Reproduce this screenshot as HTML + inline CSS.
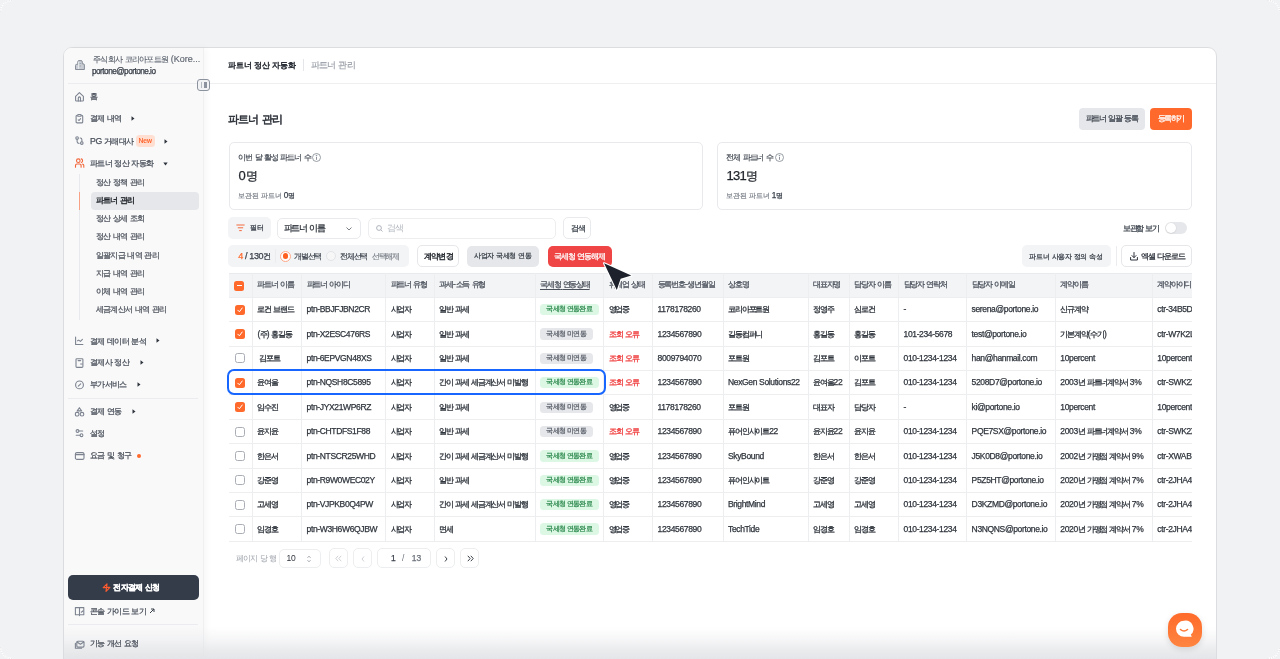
<!DOCTYPE html><html><head><meta charset="utf-8"><title>partner</title><style>
*{box-sizing:border-box;margin:0;padding:0}
html,body{width:1280px;height:659px;overflow:hidden}
body{background:#f1f2f4;font-family:"Liberation Sans",sans-serif;color:#333a45;position:relative}
i{font-style:normal}
.k{font-size:0.9em;letter-spacing:var(--ks,-0.09em)}
.bd .k{-webkit-text-stroke:0.25px currentColor}
.md{-webkit-text-stroke:0.25px currentColor}
.md2{-webkit-text-stroke:0.15px currentColor}
.tb{-webkit-text-stroke:0.25px currentColor}
.tb .k{letter-spacing:var(--ks,-0.15em);-webkit-text-stroke:0.3px currentColor}
.a{position:absolute;white-space:nowrap}
svg{position:absolute;overflow:visible}
</style></head><body><div id="root" style="position:absolute;left:0;top:0;width:1280px;height:659px;will-change:transform">
<div class="a" style="left:63px;top:47px;width:1154.00px;height:653.00px;background:#fff;border:1px solid #dcdde0;border-radius:9px;"></div>
<div class="a" style="left:64px;top:48px;width:140.00px;height:652.00px;background:#f9f9fa;border-right:1px solid #eff0f2;border-top-left-radius:8px;box-shadow:3px 0 6px rgba(20,24,30,0.03)"></div>
<div class="a" style="left:64px;top:627px;width:1152.00px;height:32.00px;background:linear-gradient(to bottom,rgba(228,229,232,0) 0%,rgba(228,229,232,0.35) 40%,rgba(228,229,232,0.75) 72%,rgba(228,229,232,1) 100%)"></div>
<div class="a" style="left:204px;top:83px;width:1012.00px;height:1.00px;background:#eeeff1"></div>
<div class="a" style="left:68px;top:83px;width:131.00px;height:1.00px;background:#ebecef"></div>
<svg style="left:75px;top:59.5px" width="10" height="10" viewBox="0 0 10 10"><path d="M0.5 9.5V5.5Q0.5 4.3 1.7 4.3H2.8V1.8Q2.8 0.6 4 0.6H6.1Q7.3 0.6 7.3 1.8V3.8H8.1Q9.4 3.8 9.4 5V9.5Z" fill="#c9cdd3" stroke="#7d8490" stroke-width="0.9" stroke-linejoin="round"/><path d="M3.6 1.6V9" stroke="#eef0f2" stroke-width="0.9"/><path d="M5.2 3V4M5.2 5.5V6.5" stroke="#7d8490" stroke-width="0.8"/></svg>
<div class="a md2" style="left:93px;top:52.40px;line-height:14px;font-size:9px;font-weight:normal;color:#5f6670;"><i class="k">주식회사</i> <i class="k">코리아포트원</i> (Kore...</div>
<div class="a  md" style="left:92px;top:65.20px;line-height:14px;font-size:8.2px;font-weight:normal;color:#333a44;letter-spacing:-0.5px">portone@portone.io</div>
<div class="a" style="left:197px;top:78.5px;width:13.00px;height:12.50px;background:#f1f2f4;border:1.6px solid #8c939e;border-radius:3px;"></div>
<div class="a" style="left:200.5px;top:81.5px;width:1.50px;height:6.50px;background:#b5bac2"></div>
<div class="a" style="left:203.5px;top:81.5px;width:3.00px;height:6.50px;background:#8c939e"></div>
<svg style="left:75px;top:91.7px" width="10" height="10" viewBox="0 0 10 10" fill="none" stroke="#7d8490" stroke-width="1.1" stroke-linecap="round" stroke-linejoin="round"><path d="M0.6 4.3L4.4 0.6L8.4 4.3V8.2Q8.4 9 7.6 9H1.4Q0.6 9 0.6 8.2Z"/><path d="M3.3 9V5.9Q3.3 4.9 4.4 4.9Q5.5 4.9 5.5 5.9V9"/></svg>
<div class="a  md" style="left:90px;top:89.30px;line-height:14px;font-size:8.7px;font-weight:normal;color:#4a515b;"><i class="k">홈</i></div>
<svg style="left:75px;top:113.8px" width="10" height="10" viewBox="0 0 10 10" fill="none" stroke="#7d8490" stroke-width="1.1" stroke-linecap="round" stroke-linejoin="round"><rect x="1.1" y="1.2" width="6.6" height="7.7" rx="1"/><path d="M2.8 1.2Q2.8 0.5 3.5 0.5H5.3Q6 0.5 6 1.2V2.2H2.8Z" fill="#fff"/><path d="M3.2 5.9L4.1 6.5L5.6 4.7"/></svg>
<div class="a  md" style="left:90px;top:111.40px;line-height:14px;font-size:8.7px;font-weight:normal;color:#4a515b;"><i class="k">결제</i> <i class="k">내역</i></div>
<svg style="left:131px;top:116.3px" width="4" height="5" viewBox="0 0 4 5"><path d="M0.5 0.3L3.5 2.5L0.5 4.7Z" fill="#2f353d"/></svg>
<svg style="left:75px;top:136.2px" width="10" height="10" viewBox="0 0 10 10" fill="none" stroke="#7d8490" stroke-width="1.1" stroke-linecap="round" stroke-linejoin="round"><circle cx="2.1" cy="2" r="1.3"/><path d="M2.1 3.3V5.6Q2.1 7.3 4 7.4"/><path d="M5.2 2Q6.9 2 6.9 3.8V5.7"/><circle cx="6.8" cy="7.1" r="1.3"/></svg>
<div class="a  md" style="left:90px;top:133.80px;line-height:14px;font-size:8.7px;font-weight:normal;color:#4a515b;letter-spacing:-0.3px">PG <i class="k">거래대사</i></div>
<svg style="left:164px;top:138.7px" width="4" height="5" viewBox="0 0 4 5"><path d="M0.5 0.3L3.5 2.5L0.5 4.7Z" fill="#2f353d"/></svg>
<div class="a" style="left:135.7px;top:135.3px;width:19.10px;height:11.40px;background:#ffdfd2;border-radius:3.5px;"></div>
<div class="a md2" style="left:138.4px;top:134.00px;line-height:14px;font-size:6.8px;font-weight:normal;color:#ff5a1f;letter-spacing:-0.1px">New</div>
<svg style="left:75px;top:158.1px" width="10" height="10" viewBox="0 0 10 10" fill="none" stroke="#f2673a" stroke-width="1.1" stroke-linecap="round" stroke-linejoin="round"><circle cx="3.3" cy="2.7" r="1.8"/><path d="M0.5 9.2V7.4Q0.5 6 2 6H4.6Q6.1 6 6.1 7.4V9.2"/><path d="M6.3 0.9Q7.6 1.2 7.6 2.7Q7.6 4.2 6.3 4.5"/><path d="M7.6 6.1Q8.8 6.3 8.8 7.6V9.2"/></svg>
<div class="a  md" style="left:90px;top:155.70px;line-height:14px;font-size:8.7px;font-weight:normal;color:#4a515b;"><i class="k">파트너</i> <i class="k">정산</i> <i class="k">자동화</i></div>
<svg style="left:162.5px;top:161.6px" width="5" height="4" viewBox="0 0 5 4"><path d="M0.3 0.5L4.7 0.5L2.5 3.5Z" fill="#2f353d"/></svg>
<div class="a" style="left:79px;top:174px;width:1.00px;height:146.00px;background:#e8e9ec"></div>
<div class="a" style="left:79px;top:192px;width:1.00px;height:18.00px;background:#f7a287"></div>
<div class="a" style="left:90.8px;top:192px;width:107.80px;height:18.00px;background:#e6e7ea;border-radius:4px;"></div>
<div class="a  md" style="left:95.7px;top:174.90px;line-height:14px;font-size:9px;font-weight:normal;color:#50565f;"><i class="k">정산</i> <i class="k">정책</i> <i class="k">관리</i></div>
<div class="a  md" style="left:95.7px;top:193.09px;line-height:14px;font-size:9px;font-weight:normal;color:#1f242b;-webkit-text-stroke:0.4px currentColor"><i class="k">파트너</i> <i class="k">관리</i></div>
<div class="a  md" style="left:95.7px;top:211.28px;line-height:14px;font-size:9px;font-weight:normal;color:#50565f;"><i class="k">정산</i> <i class="k">상세</i> <i class="k">조회</i></div>
<div class="a  md" style="left:95.7px;top:229.47px;line-height:14px;font-size:9px;font-weight:normal;color:#50565f;"><i class="k">정산</i> <i class="k">내역</i> <i class="k">관리</i></div>
<div class="a  md" style="left:95.7px;top:247.66px;line-height:14px;font-size:9px;font-weight:normal;color:#50565f;"><i class="k">일괄지급</i> <i class="k">내역</i> <i class="k">관리</i></div>
<div class="a  md" style="left:95.7px;top:265.85px;line-height:14px;font-size:9px;font-weight:normal;color:#50565f;"><i class="k">지급</i> <i class="k">내역</i> <i class="k">관리</i></div>
<div class="a  md" style="left:95.7px;top:284.04px;line-height:14px;font-size:9px;font-weight:normal;color:#50565f;"><i class="k">이체</i> <i class="k">내역</i> <i class="k">관리</i></div>
<div class="a  md" style="left:95.7px;top:302.23px;line-height:14px;font-size:9px;font-weight:normal;color:#50565f;"><i class="k">세금계산서</i> <i class="k">내역</i> <i class="k">관리</i></div>
<svg style="left:75px;top:335.9px" width="10" height="10" viewBox="0 0 10 10" fill="none" stroke="#7d8490" stroke-width="1.1" stroke-linecap="round" stroke-linejoin="round"><path d="M0.6 1V8.5H7.9"/><path d="M2.6 4.8L3.7 4.1L5.4 5.4L7.4 3.4"/></svg>
<div class="a  md" style="left:90px;top:333.50px;line-height:14px;font-size:8.7px;font-weight:normal;color:#4a515b;"><i class="k">결제</i> <i class="k">데이터</i> <i class="k">분석</i></div>
<svg style="left:156px;top:338.4px" width="4" height="5" viewBox="0 0 4 5"><path d="M0.5 0.3L3.5 2.5L0.5 4.7Z" fill="#2f353d"/></svg>
<svg style="left:75px;top:357.5px" width="10" height="10" viewBox="0 0 10 10" fill="none" stroke="#7d8490" stroke-width="1.1" stroke-linecap="round" stroke-linejoin="round"><rect x="1" y="0.7" width="6.9" height="8.7" rx="0.9"/><path d="M3.2 2.6H5.6" stroke-width="1.3"/><path d="M5.6 6H7.2" stroke-width="1.1"/></svg>
<div class="a  md" style="left:90px;top:355.10px;line-height:14px;font-size:8.7px;font-weight:normal;color:#4a515b;"><i class="k">결제사</i> <i class="k">정산</i></div>
<svg style="left:139.5px;top:360.0px" width="4" height="5" viewBox="0 0 4 5"><path d="M0.5 0.3L3.5 2.5L0.5 4.7Z" fill="#2f353d"/></svg>
<svg style="left:75px;top:379.6px" width="10" height="10" viewBox="0 0 10 10" fill="none" stroke="#7d8490" stroke-width="1.1" stroke-linecap="round" stroke-linejoin="round"><circle cx="4.5" cy="4.9" r="3.9"/><path d="M3.3 6.1L5.7 3.8"/></svg>
<div class="a  md" style="left:90px;top:377.20px;line-height:14px;font-size:8.7px;font-weight:normal;color:#4a515b;"><i class="k">부가서비스</i></div>
<svg style="left:137px;top:382.1px" width="4" height="5" viewBox="0 0 4 5"><path d="M0.5 0.3L3.5 2.5L0.5 4.7Z" fill="#2f353d"/></svg>
<div class="a" style="left:68px;top:398px;width:130.00px;height:1.00px;background:#ebecef"></div>
<svg style="left:75px;top:406.8px" width="10" height="10" viewBox="0 0 10 10" fill="none" stroke="#7d8490" stroke-width="1.1" stroke-linecap="round" stroke-linejoin="round"><path d="M4.4 0.7L6.6 3.9H2.2Z"/><rect x="0.4" y="5.4" width="3.5" height="3.6" rx="1.2"/><circle cx="7" cy="7.2" r="1.8"/></svg>
<div class="a  md" style="left:90px;top:404.40px;line-height:14px;font-size:8.7px;font-weight:normal;color:#4a515b;"><i class="k">결제</i> <i class="k">연동</i></div>
<svg style="left:132.3px;top:409.3px" width="4" height="5" viewBox="0 0 4 5"><path d="M0.5 0.3L3.5 2.5L0.5 4.7Z" fill="#2f353d"/></svg>
<svg style="left:75px;top:428.4px" width="10" height="10" viewBox="0 0 10 10" fill="none" stroke="#7d8490" stroke-width="1.1" stroke-linecap="round" stroke-linejoin="round"><circle cx="2.5" cy="3" r="1.4"/><path d="M3.9 3H7.7M1.2 7.2H5"/><circle cx="6.5" cy="7.2" r="1.4"/></svg>
<div class="a  md" style="left:90px;top:426.00px;line-height:14px;font-size:8.7px;font-weight:normal;color:#4a515b;"><i class="k">설정</i></div>
<svg style="left:75px;top:450.5px" width="10" height="10" viewBox="0 0 10 10" fill="none" stroke="#7d8490" stroke-width="1.1" stroke-linecap="round" stroke-linejoin="round"><rect x="0.4" y="1.6" width="8.6" height="6.8" rx="1.5"/><path d="M0.4 3.6H9"/></svg>
<div class="a  md" style="left:90px;top:448.10px;line-height:14px;font-size:8.7px;font-weight:normal;color:#4a515b;"><i class="k">요금</i> <i class="k">및</i> <i class="k">청구</i></div>
<div class="a" style="left:137.2px;top:453.5px;width:4.00px;height:4.00px;background:#ff6a2c;border-radius:50%"></div>
<div class="a" style="left:68.2px;top:575.2px;width:130.50px;height:24.80px;background:#343c4a;border-radius:5px;"></div>
<svg style="left:102px;top:583px" width="9" height="9" viewBox="0 0 9 9" fill="none" stroke="#ff5b2e" stroke-width="1.1" stroke-linejoin="round" stroke-linecap="round"><path d="M5 0.9L1.2 4.6H4.5L4 8.4L7.9 4.4H4.6Z"/></svg>
<div class="a  bd" style="left:113.4px;top:579.80px;line-height:14px;font-size:9px;font-weight:bold;color:#ffffff;"><i class="k">전자결제</i> <i class="k">신청</i></div>
<svg style="left:75px;top:605.9px" width="10" height="10" viewBox="0 0 10 10" fill="none" stroke="#7d8490" stroke-width="1.1" stroke-linecap="round" stroke-linejoin="round"><path d="M0.4 1.6H4.5V8.7H0.4ZM4.5 1.6H8.8V8.7H4.5M4.5 8.7V9.6"/><path d="M6.3 6.2L8.2 4.8"/></svg>
<div class="a  md" style="left:90px;top:603.50px;line-height:14px;font-size:8.7px;font-weight:normal;color:#4a515b;"><i class="k">콘솔</i> <i class="k">가이드</i> <i class="k">보기</i></div>
<svg style="left:149px;top:607.5px" width="6" height="6" viewBox="0 0 6 6" fill="none" stroke="#3a414b" stroke-width="1"><path d="M1 5L5 1M2 1H5V4"/></svg>
<div class="a" style="left:68px;top:624px;width:130.00px;height:1.00px;background:#ebecef"></div>
<svg style="left:75px;top:638.6px" width="10" height="10" viewBox="0 0 10 10" fill="none" stroke="#7d8490" stroke-width="1.1" stroke-linecap="round" stroke-linejoin="round"><path d="M0.4 4.3V9.3H6.6"/><rect x="1.8" y="2.3" width="7.2" height="5.8" rx="1"/><path d="M2 3L5.4 5.2L8.8 3"/></svg>
<div class="a  md" style="left:90px;top:636.20px;line-height:14px;font-size:8.7px;font-weight:normal;color:#4a515b;"><i class="k">기능</i> <i class="k">개선</i> <i class="k">요청</i></div>
<div class="a  md" style="left:228.3px;top:57.60px;line-height:14px;font-size:9.3px;font-weight:normal;color:#262b33;-webkit-text-stroke:0.45px currentColor;--ks:-0.25px"><i class="k">파트너</i> <i class="k">정산</i> <i class="k">자동화</i></div>
<div class="a" style="left:303px;top:59.3px;width:1.00px;height:11.50px;background:#e5e6e9"></div>
<div class="a md2" style="left:311px;top:57.60px;line-height:14px;font-size:9.8px;font-weight:normal;color:#979ca5;"><i class="k">파트너</i> <i class="k">관리</i></div>
<div class="a  md" style="left:228.3px;top:109.60px;line-height:18px;font-size:12.5px;font-weight:normal;color:#262b33;-webkit-text-stroke:0.5px currentColor"><i class="k">파트너</i> <i class="k">관리</i></div>
<div class="a" style="left:1079.1px;top:108.1px;width:65.90px;height:22.10px;background:#e6e7ea;border-radius:4px;"></div>
<div class="a  md" style="left:1085.7px;top:111.20px;line-height:14px;font-size:8.5px;font-weight:normal;color:#3a414b;;--ks:-1.3px"><i class="k">파트너</i> <i class="k">일괄</i> <i class="k">등록</i></div>
<div class="a" style="left:1150.2px;top:108.1px;width:41.70px;height:22.10px;background:#ff6a2c;border-radius:4px;"></div>
<div class="a  md" style="left:1157.5px;top:111.20px;line-height:14px;font-size:8.5px;font-weight:normal;color:#ffffff;;--ks:-1.35px"><i class="k">등록하기</i></div>
<div class="a" style="left:228.6px;top:142.1px;width:474.40px;height:68.40px;border:1px solid #e8e9ec;border-radius:5px;"></div>
<div class="a md2" style="left:238.4px;top:149.80px;line-height:14px;font-size:8.5px;font-weight:normal;color:#3d444e;;--ks:-1.05px"><i class="k">이번</i> <i class="k">달</i> <i class="k">활성</i> <i class="k">파트너</i> <i class="k">수</i></div>
<div class="a" style="left:716.5px;top:142.1px;width:475.50px;height:68.40px;border:1px solid #e8e9ec;border-radius:5px;"></div>
<div class="a md2" style="left:726.3px;top:149.80px;line-height:14px;font-size:8.5px;font-weight:normal;color:#3d444e;;--ks:-1.05px"><i class="k">전체</i> <i class="k">파트너</i> <i class="k">수</i></div>
<svg style="left:311.8px;top:152.7px" width="9" height="9" viewBox="0 0 9 9" fill="none" stroke="#7f8690" stroke-width="0.8"><circle cx="4.5" cy="4.5" r="4"/><path d="M4.5 4V6.8" stroke-width="0.9"/><circle cx="4.5" cy="2.6" r="0.4" fill="#7f8690"/></svg>
<svg style="left:774.8px;top:152.7px" width="9" height="9" viewBox="0 0 9 9" fill="none" stroke="#7f8690" stroke-width="0.8"><circle cx="4.5" cy="4.5" r="4"/><path d="M4.5 4V6.8" stroke-width="0.9"/><circle cx="4.5" cy="2.6" r="0.4" fill="#7f8690"/></svg>
<div class="a  md" style="left:238.4px;top:167.10px;line-height:18px;font-size:13px;font-weight:normal;color:#1f242b;">0<i class="k">명</i></div>
<div class="a  md" style="left:726.4px;top:167.10px;line-height:18px;font-size:13px;font-weight:normal;color:#1f242b;letter-spacing:-0.7px">131<i class="k">명</i></div>
<div class="a md2" style="left:238.4px;top:188.70px;line-height:14px;font-size:8.2px;font-weight:normal;color:#737982;;--ks:-0.2px"><i class="k">보관된</i> <i class="k">파트너</i> <b style="color:#3a414b;font-weight:normal" class="md">0<i class="k">명</i></b></div>
<div class="a md2" style="left:726.4px;top:188.70px;line-height:14px;font-size:8.2px;font-weight:normal;color:#737982;;--ks:-0.2px"><i class="k">보관된</i> <i class="k">파트너</i> <b style="color:#3a414b;font-weight:normal" class="md">1<i class="k">명</i></b></div>
<div class="a" style="left:228.4px;top:216.9px;width:42.60px;height:21.90px;background:#f3f4f6;border-radius:5px;"></div>
<svg style="left:236px;top:224px" width="9" height="8" viewBox="0 0 9 8" fill="none" stroke="#f26a3d" stroke-width="1" stroke-linecap="round"><path d="M0.8 1H8.2M2.2 3.8H6.8M3.6 6.6H5.4"/></svg>
<div class="a  md" style="left:250.3px;top:220.50px;line-height:14px;font-size:7.8px;font-weight:normal;color:#3a414b;"><i class="k">필터</i></div>
<div class="a" style="left:276.7px;top:217.5px;width:84.60px;height:21.90px;background:#fff;border:1px solid #e9eaed;border-radius:5px;"></div>
<div class="a  md" style="left:283.6px;top:221.20px;line-height:14px;font-size:9.5px;font-weight:normal;color:#2a3038;;--ks:-1.27px"><i class="k">파트너</i> <i class="k">이름</i></div>
<svg style="left:346px;top:226.5px" width="6" height="4" viewBox="0 0 6 4" fill="none" stroke="#6b717b" stroke-width="0.9"><path d="M0.5 0.5L3 3L5.5 0.5"/></svg>
<div class="a" style="left:367.9px;top:217.5px;width:188.40px;height:21.90px;background:#fff;border:1px solid #eceef0;border-radius:5px;"></div>
<svg style="left:375.6px;top:225px" width="7" height="7" viewBox="0 0 7 7" fill="none" stroke="#a7acb4" stroke-width="0.9"><circle cx="3" cy="3" r="2.4"/><path d="M4.8 4.8L6.5 6.5"/></svg>
<div class="a " style="left:386.6px;top:221.00px;line-height:14px;font-size:10px;font-weight:normal;color:#b3b8bf;"><i class="k">검색</i></div>
<div class="a" style="left:563.4px;top:217.3px;width:28.10px;height:21.40px;background:#fff;border:1px solid #e9eaed;border-radius:5px;"></div>
<div class="a  md" style="left:571.1px;top:220.60px;line-height:14px;font-size:8.5px;font-weight:normal;color:#3a414b;"><i class="k">검색</i></div>
<div class="a  md" style="left:1123px;top:220.60px;line-height:14px;font-size:8.5px;font-weight:normal;color:#3a414b;;--ks:-1.3px"><i class="k">보관함</i> <i class="k">보기</i></div>
<div class="a" style="left:1165.2px;top:222.2px;width:21.80px;height:11.60px;background:#e6e7ea;border-radius:6px;"></div>
<div class="a" style="left:1166.2px;top:223px;width:10.30px;height:10.00px;background:#fff;border-radius:50%;box-shadow:0 0.5px 1.5px rgba(0,0,0,.15)"></div>
<div class="a" style="left:228.4px;top:245.4px;width:180.60px;height:21.40px;background:#f3f4f6;border-radius:5px;"></div>
<div class="a  md" style="left:238.2px;top:248.50px;line-height:14px;font-size:9px;font-weight:normal;color:#3a414b;letter-spacing:-0.35px"><span style="color:#ff6a2c">4</span> / 130<i class="k">건</i></div>
<div class="a" style="left:275.3px;top:249px;width:0.70px;height:14.00px;background:#ebecef"></div>
<div class="a" style="left:280px;top:250.5px;width:11.00px;height:11.00px;border:1px solid #ffa886;border-radius:50%;background:#fff"></div>
<div class="a" style="left:282.9px;top:253.4px;width:5.20px;height:5.20px;background:#ff5f1f;border-radius:50%"></div>
<div class="a md2" style="left:294px;top:248.50px;line-height:14px;font-size:8.5px;font-weight:normal;color:#3a414b;;--ks:-1.24px"><i class="k">개별선택</i></div>
<div class="a" style="left:326.3px;top:251.2px;width:10.00px;height:10.00px;border:1px solid #e3e4e7;border-radius:50%;background:#f7f7f8"></div>
<div class="a md2" style="left:340px;top:248.50px;line-height:14px;font-size:8.5px;font-weight:normal;color:#3a414b;;--ks:-1.24px"><i class="k">전체선택</i></div>
<div class="a md2" style="left:371.7px;top:248.50px;line-height:14px;font-size:8.5px;font-weight:normal;color:#7b818a;;--ks:-1.1px"><i class="k">선택해제</i></div>
<div class="a" style="left:416.6px;top:245.4px;width:42.70px;height:21.40px;background:#fff;border:1px solid #e6e7ea;border-radius:5px;"></div>
<div class="a  md" style="left:423.7px;top:248.50px;line-height:14px;font-size:8.4px;font-weight:normal;color:#23282f;-webkit-text-stroke:0.4px currentColor"><i class="k">계약변경</i></div>
<div class="a" style="left:466.8px;top:245.5px;width:72.70px;height:21.40px;background:#e6e7ea;border-radius:5px;"></div>
<div class="a  md" style="left:474px;top:248.50px;line-height:14px;font-size:8.2px;font-weight:normal;color:#3a414b;;--ks:-0.36px"><i class="k">사업자</i> <i class="k">국세청</i> <i class="k">연동</i></div>
<div class="a" style="left:547.5px;top:245.5px;width:64.10px;height:21.40px;background:#ef4545;border-radius:5px;"></div>
<div class="a  md" style="left:554.2px;top:248.50px;line-height:14px;font-size:8.5px;font-weight:normal;color:#ffffff;;--ks:-1.1px"><i class="k">국세청</i> <i class="k">연동해제</i></div>
<div class="a" style="left:1022px;top:245.1px;width:88.70px;height:21.80px;background:#f3f4f6;border-radius:5px;"></div>
<div class="a  md" style="left:1029.3px;top:248.50px;line-height:14px;font-size:8.3px;font-weight:normal;color:#3a414b;;--ks:-0.35px"><i class="k">파트너</i> <i class="k">사용자</i> <i class="k">정의</i> <i class="k">속성</i></div>
<div class="a" style="left:1116px;top:246px;width:1.00px;height:20.00px;background:#ebecef"></div>
<div class="a" style="left:1121.3px;top:245.1px;width:70.70px;height:21.80px;background:#fff;border:1px solid #e6e7ea;border-radius:5px;"></div>
<svg style="left:1130.3px;top:251.5px" width="8" height="9" viewBox="0 0 8 9" fill="none" stroke="#2f353d" stroke-width="1" stroke-linecap="round" stroke-linejoin="round"><path d="M4 0.5V5.5M2 3.6L4 5.6L6 3.6M0.6 5.5V8H7.4V5.5"/></svg>
<div class="a  md" style="left:1141.2px;top:248.50px;line-height:14px;font-size:8.5px;font-weight:normal;color:#2b313a;;--ks:-1.2px"><i class="k">엑셀</i> <i class="k">다운로드</i></div>
<div class="a" style="left:228.5px;top:272px;width:963.5px;height:272px;overflow:hidden">
<div class="a" style="left:0.0px;top:1.0px;width:1031.50px;height:24.50px;background:#f3f4f6;border-top:1px solid #e9eaed"></div>
<div class="a" style="left:23.4px;top:1.0px;width:1.00px;height:268.20px;background:#eceef0"></div>
<div class="a" style="left:72.5px;top:1.0px;width:1.00px;height:268.20px;background:#eceef0"></div>
<div class="a" style="left:156.5px;top:1.0px;width:1.00px;height:268.20px;background:#eceef0"></div>
<div class="a" style="left:205.4px;top:1.0px;width:1.00px;height:268.20px;background:#eceef0"></div>
<div class="a" style="left:306.0px;top:1.0px;width:1.00px;height:268.20px;background:#eceef0"></div>
<div class="a" style="left:374.5px;top:1.0px;width:1.00px;height:268.20px;background:#eceef0"></div>
<div class="a" style="left:423.5px;top:1.0px;width:1.00px;height:268.20px;background:#eceef0"></div>
<div class="a" style="left:494.0px;top:1.0px;width:1.00px;height:268.20px;background:#eceef0"></div>
<div class="a" style="left:579.0px;top:1.0px;width:1.00px;height:268.20px;background:#eceef0"></div>
<div class="a" style="left:620.3px;top:1.0px;width:1.00px;height:268.20px;background:#eceef0"></div>
<div class="a" style="left:669.5px;top:1.0px;width:1.00px;height:268.20px;background:#eceef0"></div>
<div class="a" style="left:737.6px;top:1.0px;width:1.00px;height:268.20px;background:#eceef0"></div>
<div class="a" style="left:826.3px;top:1.0px;width:1.00px;height:268.20px;background:#eceef0"></div>
<div class="a" style="left:923.3px;top:1.0px;width:1.00px;height:268.20px;background:#eceef0"></div>
<div class="a" style="left:0.0px;top:25.0px;width:1031.50px;height:1.00px;background:#eceef0"></div>
<div class="a" style="left:0.0px;top:49.37px;width:1031.50px;height:1.00px;background:#eceef0"></div>
<div class="a" style="left:0.0px;top:73.74px;width:1031.50px;height:1.00px;background:#eceef0"></div>
<div class="a" style="left:0.0px;top:98.11px;width:1031.50px;height:1.00px;background:#eceef0"></div>
<div class="a" style="left:0.0px;top:122.48px;width:1031.50px;height:1.00px;background:#eceef0"></div>
<div class="a" style="left:0.0px;top:146.85px;width:1031.50px;height:1.00px;background:#eceef0"></div>
<div class="a" style="left:0.0px;top:171.22px;width:1031.50px;height:1.00px;background:#eceef0"></div>
<div class="a" style="left:0.0px;top:195.59px;width:1031.50px;height:1.00px;background:#eceef0"></div>
<div class="a" style="left:0.0px;top:219.96px;width:1031.50px;height:1.00px;background:#eceef0"></div>
<div class="a" style="left:0.0px;top:244.33px;width:1031.50px;height:1.00px;background:#eceef0"></div>
<div class="a" style="left:0.0px;top:268.7px;width:1031.50px;height:1.00px;background:#eceef0"></div>
<div class="a" style="left:5.7px;top:8.5px;width:10.20px;height:10.00px;background:#ff6a2c;border-radius:2.5px"></div>
<div class="a" style="left:8.0px;top:13px;width:5.60px;height:1.20px;background:#fff"></div>
<div class="a  md" style="left:28.9px;top:4.95px;line-height:14px;font-size:8.5px;font-weight:normal;color:#4a515b;;--ks:-1.25px"><i class="k">파트너</i> <i class="k">이름</i></div>
<div class="a  md" style="left:78.0px;top:4.95px;line-height:14px;font-size:8.5px;font-weight:normal;color:#4a515b;;--ks:-1.25px"><i class="k">파트너</i> <i class="k">아이디</i></div>
<div class="a  md" style="left:162.0px;top:4.95px;line-height:14px;font-size:8.5px;font-weight:normal;color:#4a515b;;--ks:-1.25px"><i class="k">파트너</i> <i class="k">유형</i></div>
<div class="a  md" style="left:210.9px;top:4.95px;line-height:14px;font-size:8.5px;font-weight:normal;color:#4a515b;;--ks:-1.25px"><i class="k">과세</i>-<i class="k">소득</i> <i class="k">유형</i></div>
<div class="a  md" style="left:311.5px;top:4.95px;line-height:14px;font-size:8.5px;font-weight:normal;color:#4a515b;text-decoration:underline;text-underline-offset:1.5px;--ks:-1.25px"><i class="k">국세청</i> <i class="k">연동상태</i></div>
<div class="a  md" style="left:380.0px;top:4.95px;line-height:14px;font-size:8.5px;font-weight:normal;color:#4a515b;;--ks:-1.25px"><i class="k">휴폐업</i> <i class="k">상태</i></div>
<div class="a  md" style="left:429.0px;top:4.95px;line-height:14px;font-size:8.5px;font-weight:normal;color:#4a515b;;--ks:-1.25px"><i class="k">등록번호</i>-<i class="k">생년월일</i></div>
<div class="a  md" style="left:499.5px;top:4.95px;line-height:14px;font-size:8.5px;font-weight:normal;color:#4a515b;;--ks:-1.25px"><i class="k">상호명</i></div>
<div class="a  md" style="left:584.5px;top:4.95px;line-height:14px;font-size:8.5px;font-weight:normal;color:#4a515b;;--ks:-1.25px"><i class="k">대표자명</i></div>
<div class="a  md" style="left:625.8px;top:4.95px;line-height:14px;font-size:8.5px;font-weight:normal;color:#4a515b;;--ks:-1.25px"><i class="k">담당자</i> <i class="k">이름</i></div>
<div class="a  md" style="left:675.0px;top:4.95px;line-height:14px;font-size:8.5px;font-weight:normal;color:#4a515b;;--ks:-1.25px"><i class="k">담당자</i> <i class="k">연락처</i></div>
<div class="a  md" style="left:743.1px;top:4.95px;line-height:14px;font-size:8.5px;font-weight:normal;color:#4a515b;;--ks:-1.25px"><i class="k">담당자</i> <i class="k">이메일</i></div>
<div class="a  md" style="left:831.8px;top:4.95px;line-height:14px;font-size:8.5px;font-weight:normal;color:#4a515b;;--ks:-1.25px"><i class="k">계약이름</i></div>
<div class="a  md" style="left:928.8px;top:4.95px;line-height:14px;font-size:8.5px;font-weight:normal;color:#4a515b;;--ks:-1.25px"><i class="k">계약아이디</i></div>
<div class="a" style="left:6.7px;top:32.69px;width:10.00px;height:10.00px;background:#ff6a2c;border-radius:2.5px"></div>
<svg style="left:8.699999999999989px;top:34.685px;position:absolute" width="6" height="6" viewBox="0 0 6 6" fill="none" stroke="#fff" stroke-width="1" stroke-linecap="round" stroke-linejoin="round"><path d="M0.8 3.2L2.4 4.8L5.2 1"/></svg>
<div class="a tb " style="left:28.9px;top:30.29px;line-height:14px;font-size:8.5px;font-weight:normal;color:#2f353d;letter-spacing:-0.35px"><i class="k">로건</i> <i class="k">브랜드</i></div>
<div class="a tb " style="left:78.0px;top:30.29px;line-height:14px;font-size:8.5px;font-weight:normal;color:#2f353d;letter-spacing:-0.35px">ptn-BBJFJBN2CR</div>
<div class="a tb " style="left:162.0px;top:30.29px;line-height:14px;font-size:8.5px;font-weight:normal;color:#2f353d;letter-spacing:-0.35px"><i class="k">사업자</i></div>
<div class="a tb " style="left:210.9px;top:30.29px;line-height:14px;font-size:8.5px;font-weight:normal;color:#2f353d;letter-spacing:-0.35px"><i class="k">일반</i> <i class="k">과세</i></div>
<div class="a" style="left:311.7px;top:32.08px;width:58.60px;height:11.30px;background:#dcf8e5;border-radius:3.5px"></div>
<div class="a  md" style="left:317.9px;top:30.29px;line-height:14px;font-size:8px;font-weight:normal;color:#2f8a4f;;--ks:-0.85px"><i class="k">국세청</i> <i class="k">연동완료</i></div>
<div class="a tb " style="left:380.0px;top:30.29px;line-height:14px;font-size:8.5px;font-weight:normal;color:#2f353d;letter-spacing:-0.35px"><i class="k">영업중</i></div>
<div class="a tb " style="left:429.0px;top:30.29px;line-height:14px;font-size:8.5px;font-weight:normal;color:#2f353d;letter-spacing:-0.35px">1178178260</div>
<div class="a tb " style="left:499.5px;top:30.29px;line-height:14px;font-size:8.5px;font-weight:normal;color:#2f353d;letter-spacing:-0.35px"><i class="k">코리아포트원</i></div>
<div class="a tb " style="left:584.5px;top:30.29px;line-height:14px;font-size:8.5px;font-weight:normal;color:#2f353d;letter-spacing:-0.35px"><i class="k">정영주</i></div>
<div class="a tb " style="left:625.8px;top:30.29px;line-height:14px;font-size:8.5px;font-weight:normal;color:#2f353d;letter-spacing:-0.35px"><i class="k">심로건</i></div>
<div class="a tb " style="left:675.0px;top:30.29px;line-height:14px;font-size:8.5px;font-weight:normal;color:#2f353d;letter-spacing:-0.35px">-</div>
<div class="a tb " style="left:743.1px;top:30.29px;line-height:14px;font-size:8.5px;font-weight:normal;color:#2f353d;letter-spacing:-0.35px">serena@portone.io</div>
<div class="a tb " style="left:831.8px;top:30.29px;line-height:14px;font-size:8.5px;font-weight:normal;color:#2f353d;letter-spacing:-0.35px"><i class="k">신규계약</i></div>
<div class="a tb " style="left:928.8px;top:30.29px;line-height:14px;font-size:8.5px;font-weight:normal;color:#2f353d;letter-spacing:-0.35px">ctr-34B5D8</div>
<div class="a" style="left:6.7px;top:57.06px;width:10.00px;height:10.00px;background:#ff6a2c;border-radius:2.5px"></div>
<svg style="left:8.699999999999989px;top:59.05500000000001px;position:absolute" width="6" height="6" viewBox="0 0 6 6" fill="none" stroke="#fff" stroke-width="1" stroke-linecap="round" stroke-linejoin="round"><path d="M0.8 3.2L2.4 4.8L5.2 1"/></svg>
<div class="a tb " style="left:28.9px;top:54.66px;line-height:14px;font-size:8.5px;font-weight:normal;color:#2f353d;letter-spacing:-0.35px">(<i class="k">주</i>) <i class="k">홍길동</i></div>
<div class="a tb " style="left:78.0px;top:54.66px;line-height:14px;font-size:8.5px;font-weight:normal;color:#2f353d;letter-spacing:-0.35px">ptn-X2ESC476RS</div>
<div class="a tb " style="left:162.0px;top:54.66px;line-height:14px;font-size:8.5px;font-weight:normal;color:#2f353d;letter-spacing:-0.35px"><i class="k">사업자</i></div>
<div class="a tb " style="left:210.9px;top:54.66px;line-height:14px;font-size:8.5px;font-weight:normal;color:#2f353d;letter-spacing:-0.35px"><i class="k">일반</i> <i class="k">과세</i></div>
<div class="a" style="left:311.7px;top:56.45px;width:52.50px;height:11.30px;background:#e6e7ea;border-radius:3.5px"></div>
<div class="a  md" style="left:317.9px;top:54.66px;line-height:14px;font-size:8px;font-weight:normal;color:#5b616b;;--ks:-0.8px"><i class="k">국세청</i> <i class="k">미연동</i></div>
<div class="a tb " style="left:380.6px;top:54.66px;line-height:14px;font-size:8.5px;font-weight:normal;color:#f03e3e;"><i class="k">조회</i> <i class="k">오류</i></div>
<div class="a tb " style="left:429.0px;top:54.66px;line-height:14px;font-size:8.5px;font-weight:normal;color:#2f353d;letter-spacing:-0.35px">1234567890</div>
<div class="a tb " style="left:499.5px;top:54.66px;line-height:14px;font-size:8.5px;font-weight:normal;color:#2f353d;letter-spacing:-0.35px"><i class="k">길동컴퍼니</i></div>
<div class="a tb " style="left:584.5px;top:54.66px;line-height:14px;font-size:8.5px;font-weight:normal;color:#2f353d;letter-spacing:-0.35px"><i class="k">홍길동</i></div>
<div class="a tb " style="left:625.8px;top:54.66px;line-height:14px;font-size:8.5px;font-weight:normal;color:#2f353d;letter-spacing:-0.35px"><i class="k">홍길동</i></div>
<div class="a tb " style="left:675.0px;top:54.66px;line-height:14px;font-size:8.5px;font-weight:normal;color:#2f353d;letter-spacing:-0.35px">101-234-5678</div>
<div class="a tb " style="left:743.1px;top:54.66px;line-height:14px;font-size:8.5px;font-weight:normal;color:#2f353d;letter-spacing:-0.35px">test@portone.io</div>
<div class="a tb " style="left:831.8px;top:54.66px;line-height:14px;font-size:8.5px;font-weight:normal;color:#2f353d;letter-spacing:-0.35px"><i class="k">기본계약</i>(<i class="k">수기</i>)</div>
<div class="a tb " style="left:928.8px;top:54.66px;line-height:14px;font-size:8.5px;font-weight:normal;color:#2f353d;letter-spacing:-0.35px">ctr-W7K2L9</div>
<div class="a" style="left:6.7px;top:81.43px;width:10.00px;height:10.00px;background:#fff;border:1.2px solid #a9aeb6;border-radius:2.5px"></div>
<div class="a tb " style="left:28.9px;top:79.03px;line-height:14px;font-size:8.5px;font-weight:normal;color:#2f353d;letter-spacing:-0.35px">&nbsp;<i class="k">김포트</i></div>
<div class="a tb " style="left:78.0px;top:79.03px;line-height:14px;font-size:8.5px;font-weight:normal;color:#2f353d;letter-spacing:-0.35px">ptn-6EPVGN48XS</div>
<div class="a tb " style="left:162.0px;top:79.03px;line-height:14px;font-size:8.5px;font-weight:normal;color:#2f353d;letter-spacing:-0.35px"><i class="k">사업자</i></div>
<div class="a tb " style="left:210.9px;top:79.03px;line-height:14px;font-size:8.5px;font-weight:normal;color:#2f353d;letter-spacing:-0.35px"><i class="k">일반</i> <i class="k">과세</i></div>
<div class="a" style="left:311.7px;top:80.82px;width:52.50px;height:11.30px;background:#e6e7ea;border-radius:3.5px"></div>
<div class="a  md" style="left:317.9px;top:79.03px;line-height:14px;font-size:8px;font-weight:normal;color:#5b616b;;--ks:-0.8px"><i class="k">국세청</i> <i class="k">미연동</i></div>
<div class="a tb " style="left:380.6px;top:79.03px;line-height:14px;font-size:8.5px;font-weight:normal;color:#f03e3e;"><i class="k">조회</i> <i class="k">오류</i></div>
<div class="a tb " style="left:429.0px;top:79.03px;line-height:14px;font-size:8.5px;font-weight:normal;color:#2f353d;letter-spacing:-0.35px">8009794070</div>
<div class="a tb " style="left:499.5px;top:79.03px;line-height:14px;font-size:8.5px;font-weight:normal;color:#2f353d;letter-spacing:-0.35px"><i class="k">포트원</i></div>
<div class="a tb " style="left:584.5px;top:79.03px;line-height:14px;font-size:8.5px;font-weight:normal;color:#2f353d;letter-spacing:-0.35px"><i class="k">김포트</i></div>
<div class="a tb " style="left:625.8px;top:79.03px;line-height:14px;font-size:8.5px;font-weight:normal;color:#2f353d;letter-spacing:-0.35px"><i class="k">이포트</i></div>
<div class="a tb " style="left:675.0px;top:79.03px;line-height:14px;font-size:8.5px;font-weight:normal;color:#2f353d;letter-spacing:-0.35px">010-1234-1234</div>
<div class="a tb " style="left:743.1px;top:79.03px;line-height:14px;font-size:8.5px;font-weight:normal;color:#2f353d;letter-spacing:-0.35px">han@hanmail.com</div>
<div class="a tb " style="left:831.8px;top:79.03px;line-height:14px;font-size:8.5px;font-weight:normal;color:#2f353d;letter-spacing:-0.35px">10percent</div>
<div class="a tb " style="left:928.8px;top:79.03px;line-height:14px;font-size:8.5px;font-weight:normal;color:#2f353d;letter-spacing:-0.35px">10percent</div>
<div class="a" style="left:6.7px;top:105.8px;width:10.00px;height:10.00px;background:#ff6a2c;border-radius:2.5px"></div>
<svg style="left:8.699999999999989px;top:107.79500000000002px;position:absolute" width="6" height="6" viewBox="0 0 6 6" fill="none" stroke="#fff" stroke-width="1" stroke-linecap="round" stroke-linejoin="round"><path d="M0.8 3.2L2.4 4.8L5.2 1"/></svg>
<div class="a tb " style="left:28.9px;top:103.40px;line-height:14px;font-size:8.5px;font-weight:normal;color:#2f353d;letter-spacing:-0.35px"><i class="k">윤여울</i></div>
<div class="a tb " style="left:78.0px;top:103.40px;line-height:14px;font-size:8.5px;font-weight:normal;color:#2f353d;letter-spacing:-0.35px">ptn-NQSH8C5895</div>
<div class="a tb " style="left:162.0px;top:103.40px;line-height:14px;font-size:8.5px;font-weight:normal;color:#2f353d;letter-spacing:-0.35px"><i class="k">사업자</i></div>
<div class="a tb " style="left:210.9px;top:103.40px;line-height:14px;font-size:8.5px;font-weight:normal;color:#2f353d;letter-spacing:-0.35px"><i class="k">간이</i> <i class="k">과세</i> <i class="k">세금계산서</i> <i class="k">미발행</i></div>
<div class="a" style="left:311.7px;top:105.19px;width:58.60px;height:11.31px;background:#dcf8e5;border-radius:3.5px"></div>
<div class="a  md" style="left:317.9px;top:103.40px;line-height:14px;font-size:8px;font-weight:normal;color:#2f8a4f;;--ks:-0.85px"><i class="k">국세청</i> <i class="k">연동완료</i></div>
<div class="a tb " style="left:380.6px;top:103.40px;line-height:14px;font-size:8.5px;font-weight:normal;color:#f03e3e;"><i class="k">조회</i> <i class="k">오류</i></div>
<div class="a tb " style="left:429.0px;top:103.40px;line-height:14px;font-size:8.5px;font-weight:normal;color:#2f353d;letter-spacing:-0.35px">1234567890</div>
<div class="a tb " style="left:499.5px;top:103.40px;line-height:14px;font-size:8.5px;font-weight:normal;color:#2f353d;letter-spacing:-0.35px">NexGen Solutions22</div>
<div class="a tb " style="left:584.5px;top:103.40px;line-height:14px;font-size:8.5px;font-weight:normal;color:#2f353d;letter-spacing:-0.35px"><i class="k">윤여울</i>22</div>
<div class="a tb " style="left:625.8px;top:103.40px;line-height:14px;font-size:8.5px;font-weight:normal;color:#2f353d;letter-spacing:-0.35px"><i class="k">김포트</i></div>
<div class="a tb " style="left:675.0px;top:103.40px;line-height:14px;font-size:8.5px;font-weight:normal;color:#2f353d;letter-spacing:-0.35px">010-1234-1234</div>
<div class="a tb " style="left:743.1px;top:103.40px;line-height:14px;font-size:8.5px;font-weight:normal;color:#2f353d;letter-spacing:-0.35px">5208D7@portone.io</div>
<div class="a tb " style="left:831.8px;top:103.40px;line-height:14px;font-size:8.5px;font-weight:normal;color:#2f353d;letter-spacing:-0.35px">2003<i class="k">년</i> <i class="k">파트너계약서</i> 3%</div>
<div class="a tb " style="left:928.8px;top:103.40px;line-height:14px;font-size:8.5px;font-weight:normal;color:#2f353d;letter-spacing:-0.35px">ctr-SWK2X1</div>
<div class="a" style="left:6.7px;top:130.17px;width:10.00px;height:10.00px;background:#ff6a2c;border-radius:2.5px"></div>
<svg style="left:8.699999999999989px;top:132.16500000000002px;position:absolute" width="6" height="6" viewBox="0 0 6 6" fill="none" stroke="#fff" stroke-width="1" stroke-linecap="round" stroke-linejoin="round"><path d="M0.8 3.2L2.4 4.8L5.2 1"/></svg>
<div class="a tb " style="left:28.9px;top:127.77px;line-height:14px;font-size:8.5px;font-weight:normal;color:#2f353d;letter-spacing:-0.35px"><i class="k">임수진</i></div>
<div class="a tb " style="left:78.0px;top:127.77px;line-height:14px;font-size:8.5px;font-weight:normal;color:#2f353d;letter-spacing:-0.35px">ptn-JYX21WP6RZ</div>
<div class="a tb " style="left:162.0px;top:127.77px;line-height:14px;font-size:8.5px;font-weight:normal;color:#2f353d;letter-spacing:-0.35px"><i class="k">사업자</i></div>
<div class="a tb " style="left:210.9px;top:127.77px;line-height:14px;font-size:8.5px;font-weight:normal;color:#2f353d;letter-spacing:-0.35px"><i class="k">일반</i> <i class="k">과세</i></div>
<div class="a" style="left:311.7px;top:129.56px;width:52.50px;height:11.31px;background:#e6e7ea;border-radius:3.5px"></div>
<div class="a  md" style="left:317.9px;top:127.77px;line-height:14px;font-size:8px;font-weight:normal;color:#5b616b;;--ks:-0.8px"><i class="k">국세청</i> <i class="k">미연동</i></div>
<div class="a tb " style="left:380.0px;top:127.77px;line-height:14px;font-size:8.5px;font-weight:normal;color:#2f353d;letter-spacing:-0.35px"><i class="k">영업중</i></div>
<div class="a tb " style="left:429.0px;top:127.77px;line-height:14px;font-size:8.5px;font-weight:normal;color:#2f353d;letter-spacing:-0.35px">1178178260</div>
<div class="a tb " style="left:499.5px;top:127.77px;line-height:14px;font-size:8.5px;font-weight:normal;color:#2f353d;letter-spacing:-0.35px"><i class="k">포트원</i></div>
<div class="a tb " style="left:584.5px;top:127.77px;line-height:14px;font-size:8.5px;font-weight:normal;color:#2f353d;letter-spacing:-0.35px"><i class="k">대표자</i></div>
<div class="a tb " style="left:625.8px;top:127.77px;line-height:14px;font-size:8.5px;font-weight:normal;color:#2f353d;letter-spacing:-0.35px"><i class="k">담당자</i></div>
<div class="a tb " style="left:675.0px;top:127.77px;line-height:14px;font-size:8.5px;font-weight:normal;color:#2f353d;letter-spacing:-0.35px">-</div>
<div class="a tb " style="left:743.1px;top:127.77px;line-height:14px;font-size:8.5px;font-weight:normal;color:#2f353d;letter-spacing:-0.35px">ki@portone.io</div>
<div class="a tb " style="left:831.8px;top:127.77px;line-height:14px;font-size:8.5px;font-weight:normal;color:#2f353d;letter-spacing:-0.35px">10percent</div>
<div class="a tb " style="left:928.8px;top:127.77px;line-height:14px;font-size:8.5px;font-weight:normal;color:#2f353d;letter-spacing:-0.35px">10percent</div>
<div class="a" style="left:6.7px;top:154.54px;width:10.00px;height:10.00px;background:#fff;border:1.2px solid #a9aeb6;border-radius:2.5px"></div>
<div class="a tb " style="left:28.9px;top:152.14px;line-height:14px;font-size:8.5px;font-weight:normal;color:#2f353d;letter-spacing:-0.35px"><i class="k">윤지윤</i></div>
<div class="a tb " style="left:78.0px;top:152.14px;line-height:14px;font-size:8.5px;font-weight:normal;color:#2f353d;letter-spacing:-0.35px">ptn-CHTDFS1F88</div>
<div class="a tb " style="left:162.0px;top:152.14px;line-height:14px;font-size:8.5px;font-weight:normal;color:#2f353d;letter-spacing:-0.35px"><i class="k">사업자</i></div>
<div class="a tb " style="left:210.9px;top:152.14px;line-height:14px;font-size:8.5px;font-weight:normal;color:#2f353d;letter-spacing:-0.35px"><i class="k">일반</i> <i class="k">과세</i></div>
<div class="a" style="left:311.7px;top:153.94px;width:52.50px;height:11.30px;background:#e6e7ea;border-radius:3.5px"></div>
<div class="a  md" style="left:317.9px;top:152.14px;line-height:14px;font-size:8px;font-weight:normal;color:#5b616b;;--ks:-0.8px"><i class="k">국세청</i> <i class="k">미연동</i></div>
<div class="a tb " style="left:380.6px;top:152.14px;line-height:14px;font-size:8.5px;font-weight:normal;color:#f03e3e;"><i class="k">조회</i> <i class="k">오류</i></div>
<div class="a tb " style="left:429.0px;top:152.14px;line-height:14px;font-size:8.5px;font-weight:normal;color:#2f353d;letter-spacing:-0.35px">1234567890</div>
<div class="a tb " style="left:499.5px;top:152.14px;line-height:14px;font-size:8.5px;font-weight:normal;color:#2f353d;letter-spacing:-0.35px"><i class="k">퓨어인사이트</i>22</div>
<div class="a tb " style="left:584.5px;top:152.14px;line-height:14px;font-size:8.5px;font-weight:normal;color:#2f353d;letter-spacing:-0.35px"><i class="k">윤지윤</i>22</div>
<div class="a tb " style="left:625.8px;top:152.14px;line-height:14px;font-size:8.5px;font-weight:normal;color:#2f353d;letter-spacing:-0.35px"><i class="k">윤지윤</i></div>
<div class="a tb " style="left:675.0px;top:152.14px;line-height:14px;font-size:8.5px;font-weight:normal;color:#2f353d;letter-spacing:-0.35px">010-1234-1234</div>
<div class="a tb " style="left:743.1px;top:152.14px;line-height:14px;font-size:8.5px;font-weight:normal;color:#2f353d;letter-spacing:-0.35px">PQE7SX@portone.io</div>
<div class="a tb " style="left:831.8px;top:152.14px;line-height:14px;font-size:8.5px;font-weight:normal;color:#2f353d;letter-spacing:-0.35px">2003<i class="k">년</i> <i class="k">파트너계약서</i> 3%</div>
<div class="a tb " style="left:928.8px;top:152.14px;line-height:14px;font-size:8.5px;font-weight:normal;color:#2f353d;letter-spacing:-0.35px">ctr-SWK2X1</div>
<div class="a" style="left:6.7px;top:178.91px;width:10.00px;height:10.00px;background:#fff;border:1.2px solid #a9aeb6;border-radius:2.5px"></div>
<div class="a tb " style="left:28.9px;top:176.51px;line-height:14px;font-size:8.5px;font-weight:normal;color:#2f353d;letter-spacing:-0.35px"><i class="k">한은서</i></div>
<div class="a tb " style="left:78.0px;top:176.51px;line-height:14px;font-size:8.5px;font-weight:normal;color:#2f353d;letter-spacing:-0.35px">ptn-NTSCR25WHD</div>
<div class="a tb " style="left:162.0px;top:176.51px;line-height:14px;font-size:8.5px;font-weight:normal;color:#2f353d;letter-spacing:-0.35px"><i class="k">사업자</i></div>
<div class="a tb " style="left:210.9px;top:176.51px;line-height:14px;font-size:8.5px;font-weight:normal;color:#2f353d;letter-spacing:-0.35px"><i class="k">간이</i> <i class="k">과세</i> <i class="k">세금계산서</i> <i class="k">미발행</i></div>
<div class="a" style="left:311.7px;top:178.31px;width:58.60px;height:11.30px;background:#dcf8e5;border-radius:3.5px"></div>
<div class="a  md" style="left:317.9px;top:176.51px;line-height:14px;font-size:8px;font-weight:normal;color:#2f8a4f;;--ks:-0.85px"><i class="k">국세청</i> <i class="k">연동완료</i></div>
<div class="a tb " style="left:380.0px;top:176.51px;line-height:14px;font-size:8.5px;font-weight:normal;color:#2f353d;letter-spacing:-0.35px"><i class="k">영업중</i></div>
<div class="a tb " style="left:429.0px;top:176.51px;line-height:14px;font-size:8.5px;font-weight:normal;color:#2f353d;letter-spacing:-0.35px">1234567890</div>
<div class="a tb " style="left:499.5px;top:176.51px;line-height:14px;font-size:8.5px;font-weight:normal;color:#2f353d;letter-spacing:-0.35px">SkyBound</div>
<div class="a tb " style="left:584.5px;top:176.51px;line-height:14px;font-size:8.5px;font-weight:normal;color:#2f353d;letter-spacing:-0.35px"><i class="k">한은서</i></div>
<div class="a tb " style="left:625.8px;top:176.51px;line-height:14px;font-size:8.5px;font-weight:normal;color:#2f353d;letter-spacing:-0.35px"><i class="k">한은서</i></div>
<div class="a tb " style="left:675.0px;top:176.51px;line-height:14px;font-size:8.5px;font-weight:normal;color:#2f353d;letter-spacing:-0.35px">010-1234-1234</div>
<div class="a tb " style="left:743.1px;top:176.51px;line-height:14px;font-size:8.5px;font-weight:normal;color:#2f353d;letter-spacing:-0.35px">J5K0D8@portone.io</div>
<div class="a tb " style="left:831.8px;top:176.51px;line-height:14px;font-size:8.5px;font-weight:normal;color:#2f353d;letter-spacing:-0.35px">2002<i class="k">년</i> <i class="k">가맹점</i> <i class="k">계약서</i> 9%</div>
<div class="a tb " style="left:928.8px;top:176.51px;line-height:14px;font-size:8.5px;font-weight:normal;color:#2f353d;letter-spacing:-0.35px">ctr-XWAB7Q</div>
<div class="a" style="left:6.7px;top:203.28px;width:10.00px;height:10.00px;background:#fff;border:1.2px solid #a9aeb6;border-radius:2.5px"></div>
<div class="a tb " style="left:28.9px;top:200.88px;line-height:14px;font-size:8.5px;font-weight:normal;color:#2f353d;letter-spacing:-0.35px"><i class="k">강준영</i></div>
<div class="a tb " style="left:78.0px;top:200.88px;line-height:14px;font-size:8.5px;font-weight:normal;color:#2f353d;letter-spacing:-0.35px">ptn-R9W0WEC02Y</div>
<div class="a tb " style="left:162.0px;top:200.88px;line-height:14px;font-size:8.5px;font-weight:normal;color:#2f353d;letter-spacing:-0.35px"><i class="k">사업자</i></div>
<div class="a tb " style="left:210.9px;top:200.88px;line-height:14px;font-size:8.5px;font-weight:normal;color:#2f353d;letter-spacing:-0.35px"><i class="k">일반</i> <i class="k">과세</i></div>
<div class="a" style="left:311.7px;top:202.68px;width:58.60px;height:11.30px;background:#dcf8e5;border-radius:3.5px"></div>
<div class="a  md" style="left:317.9px;top:200.88px;line-height:14px;font-size:8px;font-weight:normal;color:#2f8a4f;;--ks:-0.85px"><i class="k">국세청</i> <i class="k">연동완료</i></div>
<div class="a tb " style="left:380.0px;top:200.88px;line-height:14px;font-size:8.5px;font-weight:normal;color:#2f353d;letter-spacing:-0.35px"><i class="k">영업중</i></div>
<div class="a tb " style="left:429.0px;top:200.88px;line-height:14px;font-size:8.5px;font-weight:normal;color:#2f353d;letter-spacing:-0.35px">1234567890</div>
<div class="a tb " style="left:499.5px;top:200.88px;line-height:14px;font-size:8.5px;font-weight:normal;color:#2f353d;letter-spacing:-0.35px"><i class="k">퓨어인사이트</i></div>
<div class="a tb " style="left:584.5px;top:200.88px;line-height:14px;font-size:8.5px;font-weight:normal;color:#2f353d;letter-spacing:-0.35px"><i class="k">강준영</i></div>
<div class="a tb " style="left:625.8px;top:200.88px;line-height:14px;font-size:8.5px;font-weight:normal;color:#2f353d;letter-spacing:-0.35px"><i class="k">강준영</i></div>
<div class="a tb " style="left:675.0px;top:200.88px;line-height:14px;font-size:8.5px;font-weight:normal;color:#2f353d;letter-spacing:-0.35px">010-1234-1234</div>
<div class="a tb " style="left:743.1px;top:200.88px;line-height:14px;font-size:8.5px;font-weight:normal;color:#2f353d;letter-spacing:-0.35px">P5Z5HT@portone.io</div>
<div class="a tb " style="left:831.8px;top:200.88px;line-height:14px;font-size:8.5px;font-weight:normal;color:#2f353d;letter-spacing:-0.35px">2020<i class="k">년</i> <i class="k">가맹점</i> <i class="k">계약서</i> 7%</div>
<div class="a tb " style="left:928.8px;top:200.88px;line-height:14px;font-size:8.5px;font-weight:normal;color:#2f353d;letter-spacing:-0.35px">ctr-2JHA4K</div>
<div class="a" style="left:6.7px;top:227.65px;width:10.00px;height:10.00px;background:#fff;border:1.2px solid #a9aeb6;border-radius:2.5px"></div>
<div class="a tb " style="left:28.9px;top:225.25px;line-height:14px;font-size:8.5px;font-weight:normal;color:#2f353d;letter-spacing:-0.35px"><i class="k">고세영</i></div>
<div class="a tb " style="left:78.0px;top:225.25px;line-height:14px;font-size:8.5px;font-weight:normal;color:#2f353d;letter-spacing:-0.35px">ptn-VJPKB0Q4PW</div>
<div class="a tb " style="left:162.0px;top:225.25px;line-height:14px;font-size:8.5px;font-weight:normal;color:#2f353d;letter-spacing:-0.35px"><i class="k">사업자</i></div>
<div class="a tb " style="left:210.9px;top:225.25px;line-height:14px;font-size:8.5px;font-weight:normal;color:#2f353d;letter-spacing:-0.35px"><i class="k">간이</i> <i class="k">과세</i> <i class="k">세금계산서</i> <i class="k">미발행</i></div>
<div class="a" style="left:311.7px;top:227.05px;width:58.60px;height:11.30px;background:#dcf8e5;border-radius:3.5px"></div>
<div class="a  md" style="left:317.9px;top:225.25px;line-height:14px;font-size:8px;font-weight:normal;color:#2f8a4f;;--ks:-0.85px"><i class="k">국세청</i> <i class="k">연동완료</i></div>
<div class="a tb " style="left:380.0px;top:225.25px;line-height:14px;font-size:8.5px;font-weight:normal;color:#2f353d;letter-spacing:-0.35px"><i class="k">영업중</i></div>
<div class="a tb " style="left:429.0px;top:225.25px;line-height:14px;font-size:8.5px;font-weight:normal;color:#2f353d;letter-spacing:-0.35px">1234567890</div>
<div class="a tb " style="left:499.5px;top:225.25px;line-height:14px;font-size:8.5px;font-weight:normal;color:#2f353d;letter-spacing:-0.35px">BrightMind</div>
<div class="a tb " style="left:584.5px;top:225.25px;line-height:14px;font-size:8.5px;font-weight:normal;color:#2f353d;letter-spacing:-0.35px"><i class="k">고세영</i></div>
<div class="a tb " style="left:625.8px;top:225.25px;line-height:14px;font-size:8.5px;font-weight:normal;color:#2f353d;letter-spacing:-0.35px"><i class="k">고세영</i></div>
<div class="a tb " style="left:675.0px;top:225.25px;line-height:14px;font-size:8.5px;font-weight:normal;color:#2f353d;letter-spacing:-0.35px">010-1234-1234</div>
<div class="a tb " style="left:743.1px;top:225.25px;line-height:14px;font-size:8.5px;font-weight:normal;color:#2f353d;letter-spacing:-0.35px">D3KZMD@portone.io</div>
<div class="a tb " style="left:831.8px;top:225.25px;line-height:14px;font-size:8.5px;font-weight:normal;color:#2f353d;letter-spacing:-0.35px">2020<i class="k">년</i> <i class="k">가맹점</i> <i class="k">계약서</i> 7%</div>
<div class="a tb " style="left:928.8px;top:225.25px;line-height:14px;font-size:8.5px;font-weight:normal;color:#2f353d;letter-spacing:-0.35px">ctr-2JHA4K</div>
<div class="a" style="left:6.7px;top:252.01px;width:10.00px;height:10.00px;background:#fff;border:1.2px solid #a9aeb6;border-radius:2.5px"></div>
<div class="a tb " style="left:28.9px;top:249.61px;line-height:14px;font-size:8.5px;font-weight:normal;color:#2f353d;letter-spacing:-0.35px"><i class="k">임경호</i></div>
<div class="a tb " style="left:78.0px;top:249.61px;line-height:14px;font-size:8.5px;font-weight:normal;color:#2f353d;letter-spacing:-0.35px">ptn-W3H6W6QJBW</div>
<div class="a tb " style="left:162.0px;top:249.61px;line-height:14px;font-size:8.5px;font-weight:normal;color:#2f353d;letter-spacing:-0.35px"><i class="k">사업자</i></div>
<div class="a tb " style="left:210.9px;top:249.61px;line-height:14px;font-size:8.5px;font-weight:normal;color:#2f353d;letter-spacing:-0.35px"><i class="k">면세</i></div>
<div class="a" style="left:311.7px;top:251.41px;width:58.60px;height:11.31px;background:#dcf8e5;border-radius:3.5px"></div>
<div class="a  md" style="left:317.9px;top:249.61px;line-height:14px;font-size:8px;font-weight:normal;color:#2f8a4f;;--ks:-0.85px"><i class="k">국세청</i> <i class="k">연동완료</i></div>
<div class="a tb " style="left:380.0px;top:249.61px;line-height:14px;font-size:8.5px;font-weight:normal;color:#2f353d;letter-spacing:-0.35px"><i class="k">영업중</i></div>
<div class="a tb " style="left:429.0px;top:249.61px;line-height:14px;font-size:8.5px;font-weight:normal;color:#2f353d;letter-spacing:-0.35px">1234567890</div>
<div class="a tb " style="left:499.5px;top:249.61px;line-height:14px;font-size:8.5px;font-weight:normal;color:#2f353d;letter-spacing:-0.35px">TechTide</div>
<div class="a tb " style="left:584.5px;top:249.61px;line-height:14px;font-size:8.5px;font-weight:normal;color:#2f353d;letter-spacing:-0.35px"><i class="k">임경호</i></div>
<div class="a tb " style="left:625.8px;top:249.61px;line-height:14px;font-size:8.5px;font-weight:normal;color:#2f353d;letter-spacing:-0.35px"><i class="k">임경호</i></div>
<div class="a tb " style="left:675.0px;top:249.61px;line-height:14px;font-size:8.5px;font-weight:normal;color:#2f353d;letter-spacing:-0.35px">010-1234-1234</div>
<div class="a tb " style="left:743.1px;top:249.61px;line-height:14px;font-size:8.5px;font-weight:normal;color:#2f353d;letter-spacing:-0.35px">N3NQNS@portone.io</div>
<div class="a tb " style="left:831.8px;top:249.61px;line-height:14px;font-size:8.5px;font-weight:normal;color:#2f353d;letter-spacing:-0.35px">2020<i class="k">년</i> <i class="k">가맹점</i> <i class="k">계약서</i> 7%</div>
<div class="a tb " style="left:928.8px;top:249.61px;line-height:14px;font-size:8.5px;font-weight:normal;color:#2f353d;letter-spacing:-0.35px">ctr-2JHA4K</div>
</div>
<div class="a" style="left:227.3px;top:369.3px;width:378.50px;height:25.80px;border:2px solid #1766ff;border-radius:7px;"></div>
<svg style="left:0;top:0" width="1280" height="659"><path d="M604.1 263.3L631.3 275.4L620.6 278.8L616.8 290Z" fill="#fff" stroke="#fff" stroke-width="2.2" stroke-linejoin="round"/><path d="M604.1 263.3L631.3 275.4L620.6 278.8L616.8 290Z" fill="#1c212b"/></svg>
<div class="a " style="left:235.8px;top:550.90px;line-height:14px;font-size:8.5px;font-weight:normal;color:#9ca1a9;letter-spacing:-0.4px"><i class="k">페이지</i> <i class="k">당</i> <i class="k">행</i></div>
<div class="a" style="left:278.5px;top:548.6px;width:42.30px;height:19.70px;background:#fff;border:1px solid #eceef0;border-radius:5px"></div>
<div class="a " style="left:286.4px;top:551.00px;line-height:14px;font-size:8.5px;font-weight:normal;color:#2f353d;">10</div>
<svg style="left:306.6px;top:554.5px" width="4" height="8" viewBox="0 0 4 8" fill="none" stroke="#8b9099" stroke-width="0.8"><path d="M0.5 2.8L2 1.2L3.5 2.8M0.5 5.2L2 6.8L3.5 5.2"/></svg>
<div class="a" style="left:328.5px;top:548.4px;width:19.10px;height:20.00px;background:#fff;border:1px solid #eceef0;border-radius:5px"></div>
<div class="a" style="left:353px;top:548.4px;width:19.20px;height:20.00px;background:#fff;border:1px solid #eceef0;border-radius:5px"></div>
<div class="a" style="left:435.7px;top:548.4px;width:19.70px;height:20.00px;background:#fff;border:1px solid #eceef0;border-radius:5px"></div>
<div class="a" style="left:460.2px;top:548.4px;width:19.20px;height:20.00px;background:#fff;border:1px solid #eceef0;border-radius:5px"></div>
<svg style="left:335px;top:555px" width="7" height="7" viewBox="0 0 7 7" fill="none" stroke="#c9ccd1" stroke-width="0.9"><path d="M3.2 0.8L0.8 3.5L3.2 6.2M6.2 0.8L3.8 3.5L6.2 6.2"/></svg>
<svg style="left:361px;top:555.5px" width="4" height="6" viewBox="0 0 4 6" fill="none" stroke="#c9ccd1" stroke-width="0.9"><path d="M3 0.5L1 3L3 5.5"/></svg>
<svg style="left:444px;top:555.5px" width="4" height="6" viewBox="0 0 4 6" fill="none" stroke="#3a414b" stroke-width="1"><path d="M1 0.5L3 3L1 5.5"/></svg>
<svg style="left:466.5px;top:555px" width="7" height="7" viewBox="0 0 7 7" fill="none" stroke="#3a414b" stroke-width="1"><path d="M0.8 0.8L3.2 3.5L0.8 6.2M3.8 0.8L6.2 3.5L3.8 6.2"/></svg>
<div class="a" style="left:377.4px;top:548.4px;width:53.60px;height:20.00px;background:#fff;border:1px solid #eceef0;border-radius:5px"></div>
<div class="a  md" style="left:391px;top:551.00px;line-height:14px;font-size:8.5px;font-weight:normal;color:#3a414b;">1</div>
<div class="a " style="left:402px;top:551.00px;line-height:14px;font-size:8.5px;font-weight:normal;color:#6b717b;">/</div>
<div class="a  md" style="left:411.8px;top:551.00px;line-height:14px;font-size:8.5px;font-weight:normal;color:#6b717b;">13</div>
<div class="a" style="left:1167.6px;top:612.6px;width:34.30px;height:34.20px;background:linear-gradient(#ff6a2a,#ff8540);border-radius:14px;box-shadow:0 2px 6px rgba(0,0,0,.12)"></div>
<svg style="left:1175px;top:620px" width="18" height="18" viewBox="0 0 18 18"><path d="M9 0.8A8 8 0 1 0 9 16.8H16.8L15.8 14.6A8 8 0 0 0 9 0.8Z" fill="#fff"/><path d="M5.5 9.5Q9 12.5 12.5 9.5" fill="none" stroke="#ff7a36" stroke-width="1.6" stroke-linecap="round"/></svg>
<svg style="left:0;top:0" width="1280" height="659" fill="none"><g stroke="#ffffff" stroke-width="1.3"><path d="M0.3 11.5A12 12 0 0 1 12.3 0.3"/><path d="M1267.7 0.3A12 12 0 0 1 1279.7 11.5"/><path d="M0.3 647.5A12 12 0 0 0 12.3 658.7"/><path d="M1267.7 658.7A12 12 0 0 0 1279.7 647.5"/></g><g stroke="#b8bbc0" stroke-width="0.6" stroke-dasharray="0.8 1.6"><path d="M0.3 11.5A12 12 0 0 1 12.3 0.3"/><path d="M1267.7 0.3A12 12 0 0 1 1279.7 11.5"/><path d="M0.3 647.5A12 12 0 0 0 12.3 658.7"/><path d="M1267.7 658.7A12 12 0 0 0 1279.7 647.5"/></g></svg>
</div></body></html>
